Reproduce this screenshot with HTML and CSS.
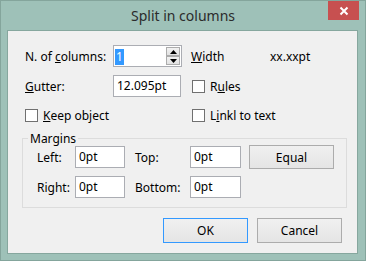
FILE: index.html
```html
<!DOCTYPE html>
<html>
<head>
<meta charset="utf-8">
<link rel="stylesheet" href="styles.css">
</head>
<body>
<div class="window">
  <div class="titlebar">
    <span></span>
    <span class="title">Split in columns</span>
    <span class="close"><svg width="31" height="19" viewBox="0 0 31 19"><path d="M12.5 6.5 L19.5 13.5 M19.5 6.5 L12.5 13.5" stroke="#fff" stroke-width="2" fill="none"/></svg></span>
  </div>
  <div class="client">
    <div class="row r1">
      <span class="lbl lw1">N. of <u>c</u>olumns:</span>
      <div class="spin">
        <span class="sel">1</span>
        <div class="spinbtns">
          <span class="sb"><svg width="7" height="4" viewBox="0 0 7 4"><path d="M0 4 L3.5 0 L7 4 Z" fill="#000"/></svg></span>
          <span class="sb"><svg width="7" height="4" viewBox="0 0 7 4"><path d="M0 0 L3.5 4 L7 0 Z" fill="#000"/></svg></span>
        </div>
      </div>
      <span class="lbl lw2"><u>W</u>idth</span>
      <span class="lbl">xx.xxpt</span>
    </div>
    <div class="row r2">
      <span class="lbl lw1"><u>G</u>utter:</span>
      <div class="input gut">12.095pt</div>
      <label class="chk ml11"><span class="box"></span><span>R<u>u</u>les</span></label>
    </div>
    <div class="row r3">
      <label class="chk cw"><span class="box"></span><span><u>K</u>eep object</span></label>
      <label class="chk"><span class="box"></span><span>L<u>i</u>nkl to text</span></label>
    </div>
    <fieldset class="group">
      <legend>Margins</legend>
      <div class="grow ga">
        <span class="lbl gl1">Left:</span>
        <div class="input mi1">0pt</div>
        <span class="lbl gl2">Top:</span>
        <div class="input mi2">0pt</div>
        <button class="btn eq">Equal</button>
      </div>
      <div class="grow gb">
        <span class="lbl gl1">Right:</span>
        <div class="input mi1">0pt</div>
        <span class="lbl gl2">Bottom:</span>
        <div class="input mi2">0pt</div>
      </div>
    </fieldset>
    <div class="actions">
      <button class="btn def">OK</button>
      <button class="btn">Cancel</button>
    </div>
  </div>
</div>
</body>
</html>
```

FILE: styles.css
```css
* { box-sizing: border-box; }
html, body { margin: 0; padding: 0; }
body {
  font-family: "Noto Sans", "Open Sans", sans-serif;
  font-size: 12px;
  color: #000;
  background: #9ec1b8;
}
.window {
  width: 366px;
  height: 261px;
  background: #9ec1b8;
  border: 1px solid #84a59c;
}
.titlebar {
  height: 29px;
  display: grid;
  grid-template-columns: 1fr auto 1fr;
}
.title {
  font-size: 14px;
  line-height: 29px;
  color: #2b2b2b;
  white-space: nowrap;
}
.close {
  justify-self: end;
  align-self: start;
  margin-right: 6px;
  width: 31px;
  height: 19px;
  background: #c75050;
  display: block;
}
.close svg { display: block; }
.client {
  margin-left: 6px;
  width: 351px;
  height: 224px;
  background: #f0f0f0;
  border: 1px solid #86a79e;
  padding: 14px 0 0 17px;
}
.row {
  display: flex;
  align-items: center;
}
.r1 { height: 22px; }
.r2 { height: 22px; margin-top: 8px; }
.r3 { height: 15px; margin-top: 11px; }
.lbl { white-space: nowrap; }
.lw1 { width: 88px; flex: none; }
.lw2 { width: 79px; flex: none; margin-left: 9px; }
u { text-decoration-thickness: 1px; text-underline-offset: 1px; }
.spin {
  width: 69px;
  height: 22px;
  background: #fff;
  border: 1px solid #abadb3;
  display: flex;
  align-items: center;
  padding-left: 1px;
}
.sel {
  display: inline-block;
  background: #3399ff;
  color: #fff;
  height: 16px;
  line-height: 16px;
  padding: 0 1px;
  margin-top: 1px;
}
.spinbtns {
  margin-left: auto;
  margin-right: 1px;
  display: flex;
  flex-direction: column;
  align-self: stretch;
  padding: 1px 0;
}
.sb {
  width: 14px;
  height: 9px;
  border: 1px solid #acacac;
  background: linear-gradient(#f2f2f2, #e2e2e2);
  display: flex;
  align-items: center;
  justify-content: center;
}
.sb svg { display: block; }
.input {
  height: 22px;
  background: #fff;
  border: 1px solid #abadb3;
  padding-left: 3px;
  line-height: 20px;
  white-space: nowrap;
  flex: none;
}
.gut { width: 68px; }
.chk {
  display: flex;
  align-items: center;
  gap: 5px;
  white-space: nowrap;
}
.box {
  width: 13px;
  height: 13px;
  border: 1px solid #707070;
  background: #fff;
  flex: none;
}
.ml11 { margin-left: 11px; }
.cw { width: 167px; flex: none; }
.group {
  margin: 9px 0 0 -3px;
  width: 325px;
  border: 1px solid #dcdcdc;
  padding: 0 0 9px 5px;
  min-width: 0;
}
.group legend {
  padding: 0 2px;
  line-height: 13px;
  font-size: 12px;
}
.grow {
  display: flex;
  align-items: center;
  margin-left: 9px;
}
.ga { height: 24px; }
.gb { height: 22px; margin-top: 7px; }
.gl1 { width: 38px; flex: none; }
.gl2 { width: 55px; flex: none; margin-left: 10px; }
.mi1 { width: 50px; }
.mi2 { width: 51px; }
.btn {
  font-family: inherit;
  font-size: 12px;
  color: #000;
  border: 1px solid #acacac;
  background: linear-gradient(#f0f0f0, #e5e5e5);
  width: 85px;
  padding: 0;
  margin: 0;
}
.eq { height: 24px; margin-left: 8px; }
.actions {
  display: flex;
  justify-content: flex-end;
  gap: 9px;
  margin-top: 10px;
  padding-right: 15px;
}
.actions .btn { height: 25px; }
.def { border-color: #3399ff; }
```
